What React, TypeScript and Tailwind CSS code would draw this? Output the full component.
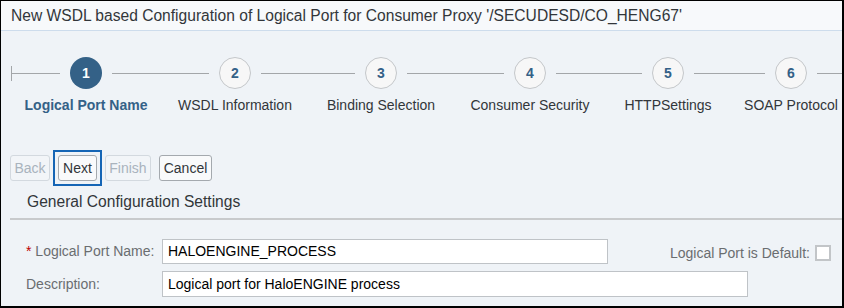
import React from "react";

const steps = [
  { n: 1, label: "Logical Port Name", w: "w-[150px]", active: true, first: true },
  { n: 2, label: "WSDL Information", w: "w-[148px]" },
  { n: 3, label: "Binding Selection", w: "w-[144px]" },
  { n: 4, label: "Consumer Security", w: "w-[154px]" },
  { n: 5, label: "HTTPSettings", w: "w-[122px]" },
  { n: 6, label: "SOAP Protocol", w: "w-[124px]" },
];

function Step({ step }: { step: (typeof steps)[number] }) {
  return (
    <div className={`${step.w} flex shrink-0 flex-col items-center`}>
      <div className="flex h-8 w-full items-center">
        <div className="relative mr-[10px] h-px flex-1 bg-[#a3a6a9]">
          {step.first ? (
            <span className="absolute -top-[7px] left-0 h-[15px] w-px bg-[#a3a6a9]" />
          ) : null}
        </div>
        <div
          className={`flex h-8 w-8 shrink-0 items-center justify-center rounded-full text-[14px] font-bold ${
            step.active
              ? "bg-[#346187] text-white"
              : "border border-[#c4c7ca] bg-[#f7f7f7] text-[#346187]"
          }`}
        >
          {step.n}
        </div>
        <div className="ml-[10px] h-px flex-1 bg-[#a3a6a9]" />
      </div>
      <span
        className={`mt-[6px] whitespace-nowrap text-[14px] leading-[20px] ${
          step.active ? "font-bold text-[#346187]" : "text-[#32363a]"
        }`}
      >
        {step.label}
      </span>
    </div>
  );
}

function Btn({
  label,
  w,
  disabled,
  focused,
}: {
  label: string;
  w: string;
  disabled?: boolean;
  focused?: boolean;
}) {
  return (
    <span className="relative">
      <button
        className={`${w} h-[26px] rounded-[3px] border text-center text-[14px] leading-[24px] ${
          disabled
            ? "border-[#d3d9df] bg-[#f2f5f8] text-[#a9b3bd]"
            : "border-[#a4a9ae] bg-[#f9fafb] text-[#32363a]"
        }`}
      >
        {label}
      </button>
      {focused ? (
        <span className="pointer-events-none absolute -inset-x-[5px] -top-[5px] -bottom-[5px] border-2 border-[#1565b5]" />
      ) : null}
    </span>
  );
}

export default function App() {
  return (
    <div className="h-[308px] w-[844px] overflow-hidden border-t border-l border-r-2 border-b-2 border-black bg-[#eff3f7] font-['Liberation_Sans',Arial,sans-serif] text-[#32363a]">
      <div className="flex h-[30px] items-center border-b border-[#cddcec] bg-[#f7f9fb] px-[10px] text-[15.6px]">
        New WSDL based Configuration of Logical Port for Consumer Proxy '/SECUDESD/CO_HENG67'
      </div>

      <div className="flex pl-[10px] pt-[26px]">
        {steps.map((s) => (
          <Step key={s.n} step={s} />
        ))}
      </div>

      <div className="mt-[40px] flex h-[26px] gap-2 pl-[9px]">
        <Btn label="Back" w="w-[40px]" disabled />
        <Btn label="Next" w="w-[39px]" focused />
        <Btn label="Finish" w="w-[46px]" disabled />
        <Btn label="Cancel" w="w-[53px]" />
      </div>

      <div className="ml-[9px] border-b-2 border-[#c8cacc] pb-[5px] pl-[17px] pt-[10px] text-[15.6px] leading-[22px]">
        General Configuration Settings
      </div>

      <div className="flex flex-col gap-[7px] pl-[25px] pr-[11px] pt-[19px] text-[14px]">
        <div className="flex h-[25px] items-center">
          <span className="w-[136px] shrink-0 text-[#6a6d70]">
            <span className="text-[#bb0000]">*</span> Logical Port Name:
          </span>
          <div className="flex h-[25px] w-[446px] items-center border border-[#bfc3c7] bg-white px-[5px] text-black">
            HALOENGINE_PROCESS
          </div>
          <div className="ml-auto flex items-center gap-[5px] pt-[3px]">
            <span className="text-[#6a6d70]">Logical Port is Default:</span>
            <span className="h-4 w-4 border-2 border-[#c2c5c8] bg-white" />
          </div>
        </div>
        <div className="flex h-[26px] items-center">
          <span className="w-[136px] shrink-0 text-[#6a6d70]">Description:</span>
          <div className="flex h-[26px] w-[586px] items-center border border-[#bfc3c7] bg-white px-[5px] text-black">
            Logical port for HaloENGINE process
          </div>
        </div>
      </div>
    </div>
  );
}
